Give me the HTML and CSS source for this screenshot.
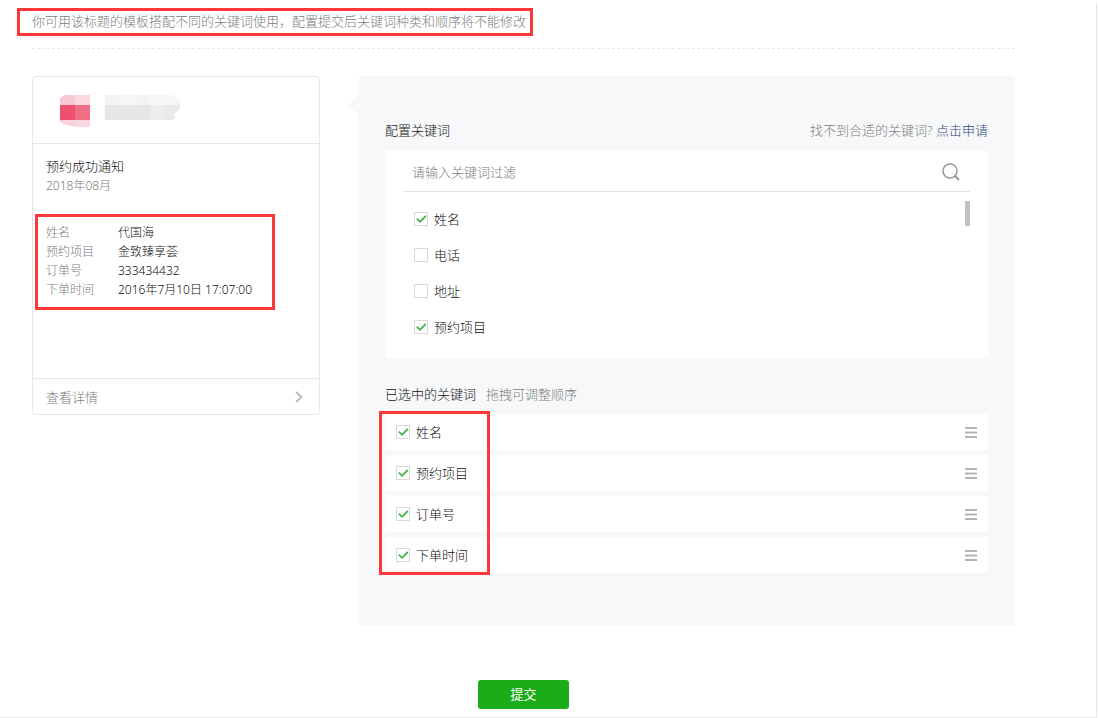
FILE: index.html
```html
<!DOCTYPE html>
<html lang="zh-CN">
<head>
<meta charset="utf-8">
<meta name="viewport" content="width=device-width, initial-scale=1">
<title>配置关键词</title>
<link rel="stylesheet" href="styles.css">
</head>
<body>
<main class="page">
  <header class="notice">
    <p class="notice-text marked">你可用该标题的模板搭配不同的关键词使用，配置提交后关键词种类和顺序将不能修改</p>
  </header>

  <form class="form">
    <div class="columns">
      <section class="card">
        <div class="card-head">
          <svg class="account" width="120" height="32" viewBox="0 0 120 32" shape-rendering="crispEdges" aria-hidden="true">
            <path d="M4 0H15V10H0V3H1V2H2V1H4Z" fill="#f8c9d3"/>
            <path d="M15 0H30V10H15Z" fill="#fad8df"/>
            <path d="M0 10H15V25H0Z" fill="#ec526f"/>
            <path d="M15 10H30V25H15Z" fill="#f06e86"/>
            <path d="M0 25H15V31H8V30H5V29H3V28H1V27H0Z" fill="#f9d2da"/>
            <path d="M15 25H30V32H15Z" fill="#fad8df"/>
            <path d="M30 10H45V25H30Z" fill="#fdfdfd"/>
            <path d="M45 0H60V10H45Z" fill="#f3f3f3"/>
            <path d="M60 0H75V10H60Z" fill="#f6f6f6"/>
            <path d="M75 0H90V10H75Z" fill="#f4f4f4"/>
            <path d="M90 0H114V1H116V2H117V3H118V4H119V6H120V10H90Z" fill="#f7f7f7"/>
            <path d="M45 10H90V25H45Z" fill="#e6e6e6"/>
            <path d="M90 10H105V25H90Z" fill="#ededed"/>
            <path d="M105 10H120V14H119V15H118V16H117V17H116V18H115V19H114V20H115V24H114V25H105Z" fill="#e9e9e9"/>
          </svg>
        </div>
        <div class="card-body">
          <h2 class="card-title">预约成功通知</h2>
          <p class="card-date">2018年08月</p>
          <dl class="details marked">
            <dt>姓名</dt><dd>代国海</dd>
            <dt>预约项目</dt><dd>金致臻享荟</dd>
            <dt>订单号</dt><dd>333434432</dd>
            <dt>下单时间</dt><dd>2016年7月10日 17:07:00</dd>
          </dl>
        </div>
        <a class="card-foot" href="#">
          <span>查看详情</span>
          <svg width="8" height="12" viewBox="0 0 8 12" fill="none" stroke="#bcbcbc" stroke-width="2" aria-hidden="true"><path d="M1 1L6.300 6L1 11"/></svg>
        </a>
      </section>

      <section class="panel">
        <div class="panel-head">
          <h2 class="panel-title">配置关键词</h2>
          <p class="hint">找不到合适的关键词? <a class="link" href="#">点击申请</a></p>
        </div>

        <div class="picker">
          <div class="search">
            <input class="search-input" type="text" placeholder="请输入关键词过滤" aria-label="请输入关键词过滤">
            <button class="search-button" type="button" aria-label="搜索">
              <svg width="18" height="18" viewBox="0 0 18 18" fill="none" stroke="#9a9a9a" aria-hidden="true"><circle cx="8" cy="8" r="7" stroke-width="1.600"/><path d="M12.500 12.500L17 17" stroke-width="2"/></svg>
            </button>
          </div>
          <div class="options">
            <ul class="option-list">
              <li><label class="choice"><input class="check" type="checkbox" checked>姓名</label></li>
              <li><label class="choice"><input class="check" type="checkbox">电话</label></li>
              <li><label class="choice"><input class="check" type="checkbox">地址</label></li>
              <li><label class="choice"><input class="check" type="checkbox" checked>预约项目</label></li>
            </ul>
            <div class="thumb"></div>
          </div>
        </div>

        <div class="selected-head">
          <h2 class="panel-title">已选中的关键词</h2>
          <p class="hint">拖拽可调整顺序</p>
        </div>
        <ul class="selected marked">
          <li class="row"><label class="choice"><input class="check" type="checkbox" checked>姓名</label><button class="grip" type="button" aria-label="拖拽姓名"></button></li>
          <li class="row"><label class="choice"><input class="check" type="checkbox" checked>预约项目</label><button class="grip" type="button" aria-label="拖拽预约项目"></button></li>
          <li class="row"><label class="choice"><input class="check" type="checkbox" checked>订单号</label><button class="grip" type="button" aria-label="拖拽订单号"></button></li>
          <li class="row"><label class="choice"><input class="check" type="checkbox" checked>下单时间</label><button class="grip" type="button" aria-label="拖拽下单时间"></button></li>
        </ul>
      </section>
    </div>
    <button class="submit" type="submit">提交</button>
  </form>
</main>
</body>
</html>
```
FILE: styles.css
```css
*, *::before, *::after {
  box-sizing: border-box;
}

body {
  margin: 0;
  background: #fff;
  color: #111;
  font: 300 13px/20px "Noto Sans", "Noto Sans CJK SC", sans-serif;
}

h2, p, ul, dl, dd {
  margin: 0;
  padding: 0;
  font-size: inherit;
  font-weight: inherit;
}

ul {
  list-style: none;
}

a {
  text-decoration: none;
}

button, input {
  margin: 0;
  padding: 0;
  border: 0;
  background: none;
  font: inherit;
}

.page {
  margin: 3px 1px 0 0;
  padding: 0 81px 8px 32px;
  border-right: 1px solid #e7e7eb;
  border-bottom: 1px solid #ededed;
}

/* Red frames that point out parts of the form */
.marked {
  position: relative;
}

.marked::after {
  content: "";
  position: absolute;
  border: 3px solid #fc3838;
  pointer-events: none;
}

.notice {
  padding: 8px 0 17px;
  border-bottom: 1px dashed #e7e7e7;
  color: #7c7c7c;
}

.notice-text {
  width: fit-content;
}

.notice-text::after {
  inset: -3px -7px -5px -15px;
}

.form {
  display: flex;
  flex-direction: column;
  padding-top: 27px;
}

.columns {
  display: flex;
  align-items: flex-start;
  gap: 38px;
}

/* Message preview */
.card {
  flex: 0 0 288px;
  border: 1px solid #e7e7eb;
  border-radius: 4px;
}

.card-head {
  padding: 18px 27px 16px;
  border-bottom: 1px solid #e7e7eb;
}

.account {
  display: block;
}

.card-body {
  min-height: 234px;
  padding: 13px 13px 0;
  line-height: 19px;
}

.card-date {
  color: #7c7c7c;
  font-size: 12px;
}

.details {
  display: grid;
  grid-template-columns: 72px 1fr;
  margin-top: 28px;
  font-size: 12px;
}

.details::after {
  inset: -9px 31px -11px -11px;
}

.details dt {
  color: #7c7c7c;
}

.card-foot {
  display: flex;
  align-items: center;
  justify-content: space-between;
  height: 36px;
  padding: 0 16px 0 13px;
  border-top: 1px solid #e7e7eb;
  color: #7c7c7c;
}

/* Keyword settings */
.panel {
  position: relative;
  flex: 1;
  padding: 44px 27px 53px;
  border-radius: 4px;
  background: #f6f8f9;
}

.panel::before {
  content: "";
  position: absolute;
  top: 19px;
  left: -9px;
  width: 9px;
  height: 20px;
  background: #f6f8f9;
  clip-path: polygon(100% 0, 100% 100%, 0 50%);
}

.panel-head {
  display: flex;
  justify-content: space-between;
}

.hint {
  color: #7c7c7c;
}

.link {
  color: #2f4780;
}

.picker {
  margin-top: 10px;
  padding: 0 18px 13px;
  border-radius: 4px;
  background: #fff;
}

.search {
  display: flex;
  align-items: center;
  height: 42px;
  padding: 3px 10px 0 9px;
  border-bottom: 1px solid #e4e4e4;
}

.search-input {
  flex: 1;
  min-width: 0;
  height: 30px;
  outline: 0;
}

.search-input::placeholder {
  color: #7c7c7c;
}

.search-button, .search-button svg {
  display: block;
}

.options {
  display: flex;
  align-items: flex-start;
  justify-content: space-between;
  padding: 9px 0 0 11px;
}

.thumb {
  width: 5px;
  height: 25px;
  background: #c1c1c1;
}

.choice {
  display: flex;
  align-items: center;
  gap: 6px;
  height: 36px;
}

.check {
  appearance: none;
  width: 14px;
  height: 14px;
  border: 1px solid #d9dadc;
  background: #fff;
}

.check:checked {
  background: #fff url("data:image/svg+xml,%3Csvg xmlns='http://www.w3.org/2000/svg' viewBox='0 0 12 12'%3E%3Cpath d='M1.800 5.700L5 8.800L10.800 3' fill='none' stroke='%2344b549' stroke-width='1.800'/%3E%3C/svg%3E") center / 12px 12px no-repeat;
}

.selected-head {
  display: flex;
  gap: 10px;
  margin-top: 26px;
}

.selected {
  display: flex;
  flex-direction: column;
  gap: 5px;
  margin-top: 10px;
}

.selected::after {
  top: -3px;
  bottom: -2px;
  left: -6px;
  width: 111px;
}

.row {
  display: flex;
  align-items: center;
  justify-content: space-between;
  height: 36px;
  padding: 0 11px;
  border-radius: 3px;
  background: #fff;
}

.grip {
  width: 12px;
  height: 11px;
  background: linear-gradient(#b3b3b3 0 2px, transparent 2px 4px, #dcdcdc 4px 5px, #b0b0b0 5px 6px, #dcdcdc 6px 7px, transparent 7px 9px, #b3b3b3 9px);
}

.submit {
  align-self: center;
  min-width: 91px;
  height: 29px;
  margin-top: 54px;
  padding-bottom: 2px;
  border-radius: 3px;
  background: #1aad19;
  color: #fff;
  font-weight: 400;
}
```
